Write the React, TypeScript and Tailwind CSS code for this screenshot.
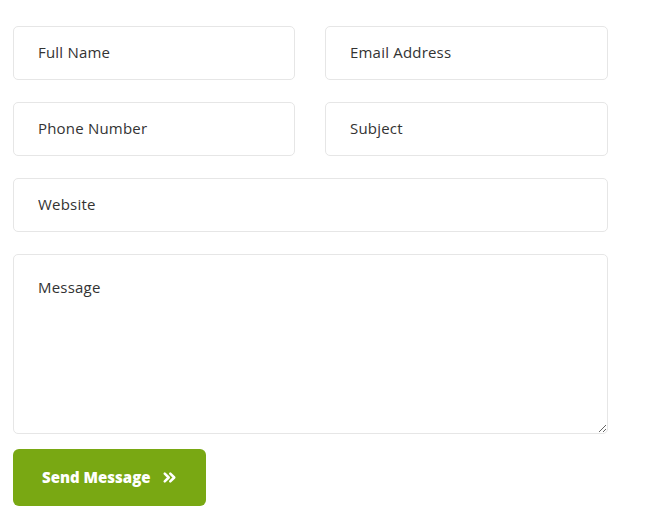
import React from "react";
import { ChevronsRight } from "lucide-react";

const inputClass =
  "w-full h-[54px] rounded-[5px] border border-[#e6e6e6] bg-white pl-6 pr-4 pb-[2px] text-[15px] tracking-[0.2px] text-[#333] placeholder:text-[#333] outline-none";

const App: React.FC = () => {
  return (
    <div
      className="min-h-[532px] w-[672px] bg-white pt-[26px] pl-[13px]"
      style={{ fontFamily: "'Open Sans', Lato, sans-serif" }}
    >
      <form className="w-[595px] flex flex-col gap-[22px]" onSubmit={(e) => e.preventDefault()}>
        <div className="grid grid-cols-[282px_283px] gap-x-[30px]">
          <input className={inputClass} placeholder="Full Name" />
          <input className={inputClass} placeholder="Email Address" />
        </div>
        <div className="grid grid-cols-[282px_283px] gap-x-[30px]">
          <input className={inputClass} placeholder="Phone Number" />
          <input className={inputClass} placeholder="Subject" />
        </div>
        <input className={inputClass} placeholder="Website" />
        <textarea
          className="block w-full h-[180px] rounded-[5px] border border-[#e6e6e6] bg-white px-6 pt-[21px] text-[15px] tracking-[0.2px] text-[#333] placeholder:text-[#333] outline-none"
          placeholder="Message"
        />
        <div className="-mt-[7px]">
          <button
            type="submit"
            className="flex h-[57px] w-[193px] items-center rounded-[6px] bg-[#79a813] pl-[29px] text-[15px] font-extrabold text-white"
          >
            Send Message
            <ChevronsRight className="ml-[9px]" size={19} strokeWidth={3.2} />
          </button>
        </div>
      </form>
    </div>
  );
};

export default App;
